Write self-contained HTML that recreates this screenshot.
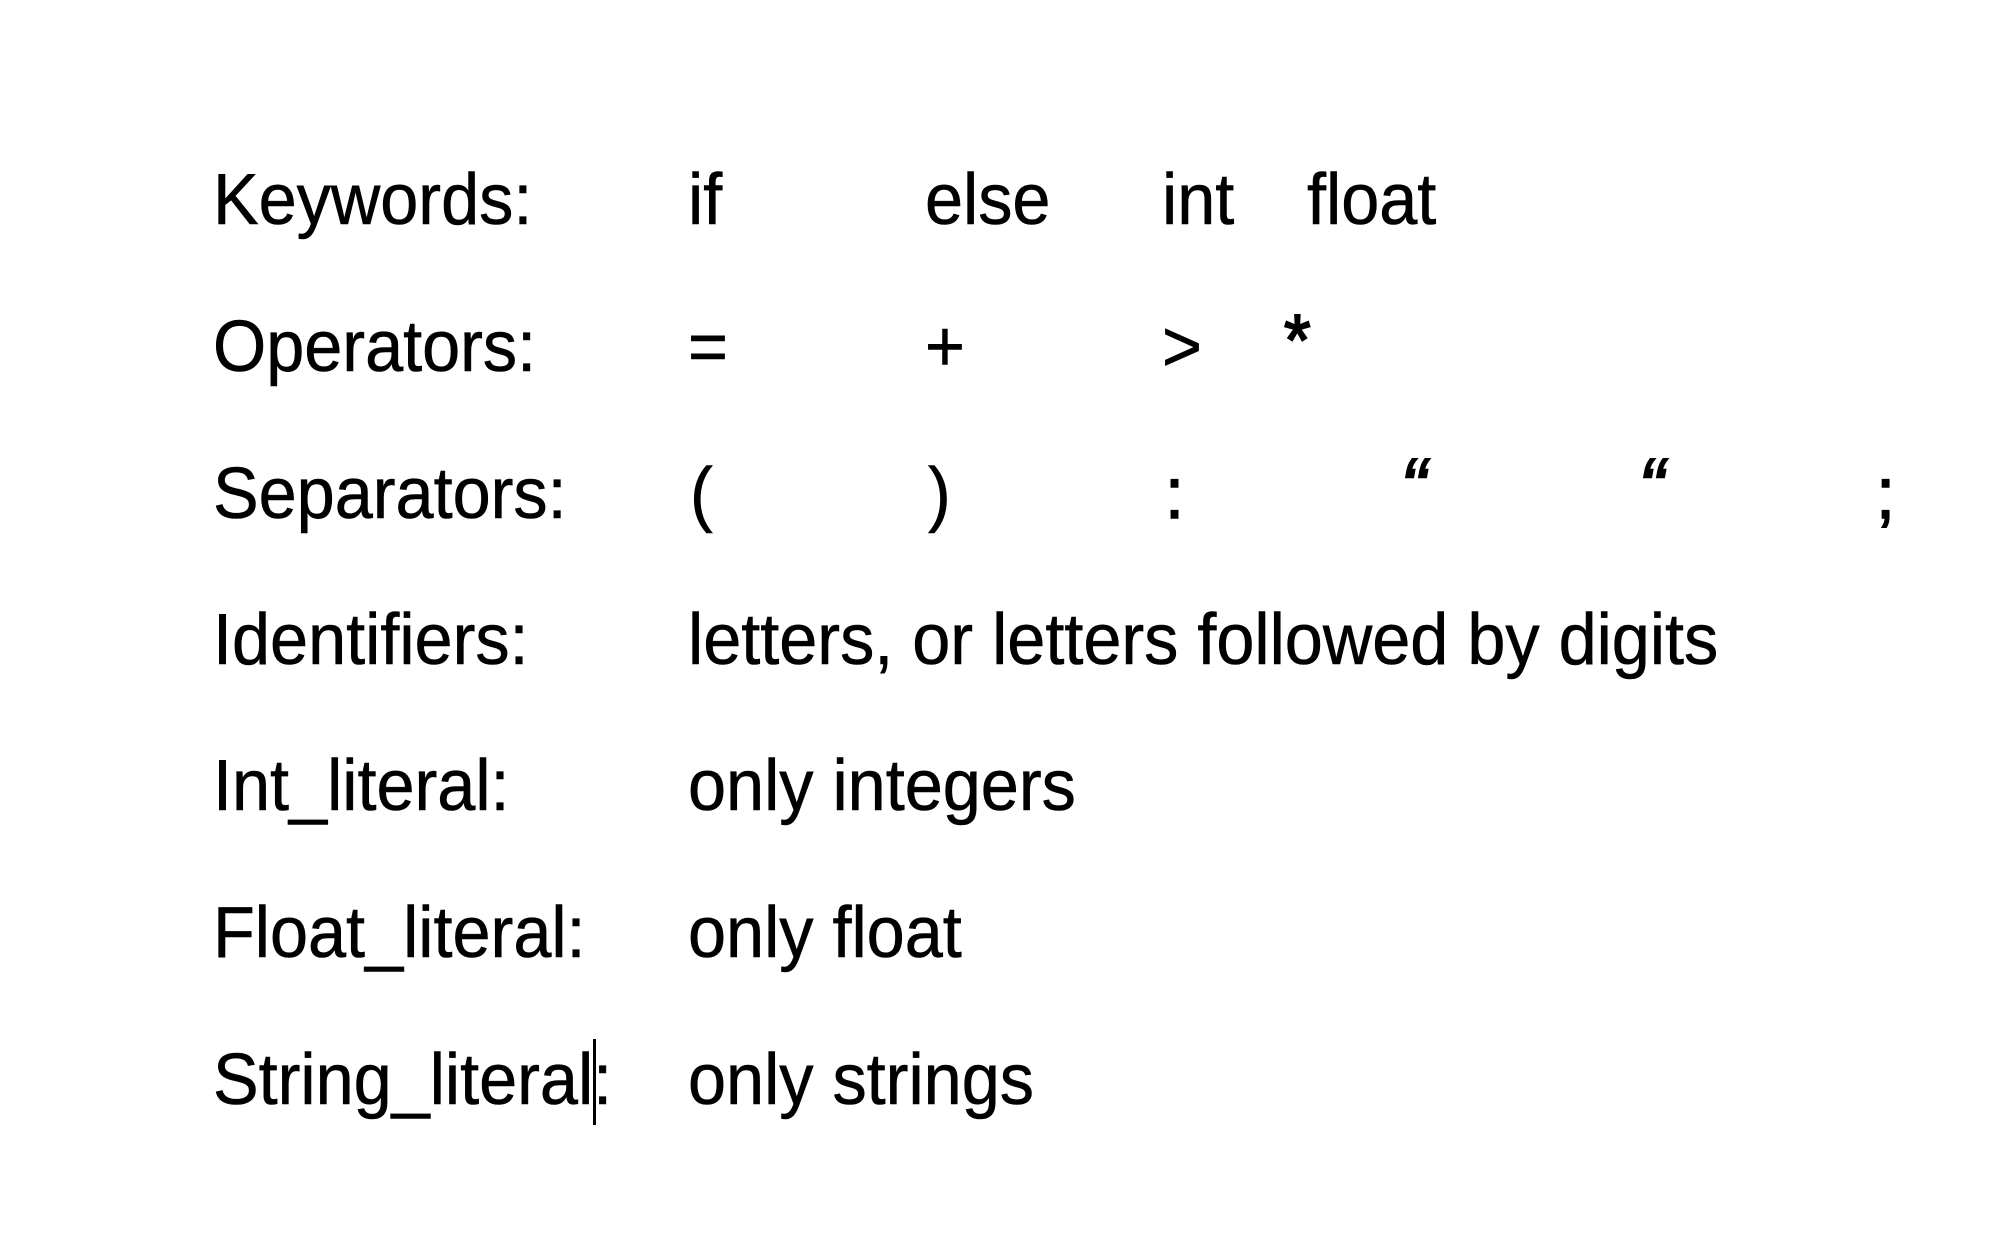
<!DOCTYPE html>
<html><head><meta charset="utf-8"><style>
html,body{margin:0;padding:0;background:#fff;width:2012px;height:1248px;overflow:hidden;position:relative}
.t{position:absolute;font-family:"Liberation Sans",sans-serif;font-size:72px;line-height:72px;color:#000;white-space:pre;transform:scaleX(0.95);transform-origin:0 0;-webkit-text-stroke:0.6px #000}
.q{font-size:84px;font-style:italic}
</style></head><body>
<div class="t" style="left:213px;top:164px">Keywords:</div>
<div class="t" style="left:688px;top:164px">if</div>
<div class="t" style="left:925px;top:164px">else</div>
<div class="t" style="left:1162px;top:164px">int</div>
<div class="t" style="left:1307px;top:164px">float</div>

<div class="t" style="left:213px;top:311px">Operators:</div>
<div class="t" style="left:688px;top:311px">=</div>
<div class="t" style="left:925px;top:311px">+</div>
<div class="t" style="left:1162px;top:311px">&gt;</div>
<div class="t" style="left:1284px;top:305px;-webkit-text-stroke:2px #000">*</div>

<div class="t" style="left:213px;top:458px">Separators:</div>
<div class="t" style="left:690px;top:458px">(</div>
<div class="t" style="left:928px;top:458px">)</div>
<div class="t" style="left:1165px;top:458px;-webkit-text-stroke:1.5px #000">:</div>
<div class="t q" style="left:1400px;top:452px;-webkit-text-stroke:1.5px #000">“</div>
<div class="t q" style="left:1638px;top:452px;-webkit-text-stroke:1.5px #000">“</div>
<div class="t" style="left:1876px;top:458px;-webkit-text-stroke:1.5px #000">;</div>

<div class="t" style="left:213px;top:604px">Identifiers:</div>
<div class="t" style="left:688px;top:604px">letters, or letters followed by digits</div>

<div class="t" style="left:213px;top:750px">Int_literal:</div>
<div class="t" style="left:688px;top:750px">only integers</div>

<div class="t" style="left:213px;top:897px">Float_literal:</div>
<div class="t" style="left:688px;top:897px">only float</div>

<div class="t" style="left:213px;top:1044px">String_literal:</div>
<div class="t" style="left:688px;top:1044px">only strings</div>
<div style="position:absolute;left:593px;top:1039px;width:3px;height:86px;background:#000"></div>
</body></html>
